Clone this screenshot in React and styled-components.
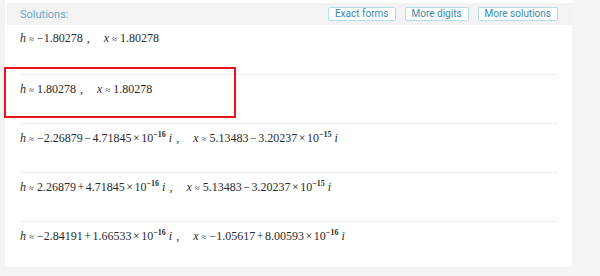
import styled, { createGlobalStyle } from 'styled-components'

const GlobalStyle = createGlobalStyle`
  html, body {
    margin: 0;
    padding: 0;
    background: #f4f4f4;
  }
`

const Page = styled.div`
  width: 600px;
  height: 276px;
  padding: 0 28px 9px 5px;
  box-sizing: border-box;
  overflow: hidden;
`

const Panel = styled.section`
  position: relative;
  background: #fff;
  height: 267px;
  padding-top: 3px;
  box-sizing: border-box;
`

const Header = styled.div`
  display: flex;
  align-items: center;
  height: 22px;
  margin-left: 2px;
  padding: 0 14px 0 13px;
  background: #f3f3f3;
  font-family: Roboto, "Liberation Sans", sans-serif;
  font-size: 11px;
`

const Title = styled.span`
  flex: 1;
  color: #6ba7c4;
`

const Actions = styled.div`
  display: flex;
  gap: 9px;
`

const Action = styled.button`
  height: 14px;
  padding: 0 6px;
  border: 1px solid #b9dcea;
  border-radius: 2px;
  background: #fff;
  color: #3b87ad;
  font: inherit;
  font-size: 10px;
  line-height: 12px;
`

const Rows = styled.div`
  padding: 0 14px 0 15px;
`

const Row = styled.div`
  height: 49px;
  box-sizing: border-box;
  padding-top: ${(p) => (p.$first ? '5px' : '6px')};
  border-top: ${(p) => (p.$first ? 'none' : '1px solid #ececec')};
  font-family: "Liberation Serif", "DejaVu Serif", serif;
  font-size: 12px;
  line-height: 16px;
  color: #2a2a2a;
  white-space: nowrap;
`

const Var = styled.i`
  font-style: italic;
`

const Approx = styled.span`
  font-size: 9px;
  margin: 0 3px 0 3px;
`

const Sep = styled.span`
  margin: 0 14px 0 4px;
`

const Op = styled.span`
  margin: 0 1.5px;
`

const Sup = styled.sup`
  font-size: 8px;
  font-weight: bold;
  vertical-align: 5px;
  line-height: 0;
  margin-right: 3px;
`

const Highlight = styled.div`
  position: absolute;
  left: -1px;
  top: 67px;
  width: 232px;
  height: 51px;
  box-sizing: border-box;
  border: 2px solid #e8161c;
`

function Sci({ m, e }) {
  return (
    <>
      {m}<Op>×</Op>10<Sup>−{e}</Sup><Var>i</Var>
    </>
  )
}

function Eq({ name, children }) {
  return (
    <>
      <Var>{name}</Var><Approx>≈</Approx>{children}
    </>
  )
}

export default function App() {
  return (
    <>
      <GlobalStyle />
      <Page>
        <Panel>
          <Header>
            <Title>Solutions:</Title>
            <Actions>
              <Action>Exact forms</Action>
              <Action>More digits</Action>
              <Action>More solutions</Action>
            </Actions>
          </Header>
          <Rows>
            <Row $first>
              <Eq name='h'>−1.80278</Eq><Sep>,</Sep>
              <Eq name='x'>1.80278</Eq>
            </Row>
            <Row>
              <Eq name='h'>1.80278</Eq><Sep>,</Sep>
              <Eq name='x'>1.80278</Eq>
            </Row>
            <Row>
              <Eq name='h'>−2.26879<Op>−</Op><Sci m='4.71845' e='16' /></Eq><Sep>,</Sep>
              <Eq name='x'>5.13483<Op>−</Op><Sci m='3.20237' e='15' /></Eq>
            </Row>
            <Row>
              <Eq name='h'>2.26879<Op>+</Op><Sci m='4.71845' e='16' /></Eq><Sep>,</Sep>
              <Eq name='x'>5.13483<Op>−</Op><Sci m='3.20237' e='15' /></Eq>
            </Row>
            <Row>
              <Eq name='h'>−2.84191<Op>+</Op><Sci m='1.66533' e='16' /></Eq><Sep>,</Sep>
              <Eq name='x'>−1.05617<Op>+</Op><Sci m='8.00593' e='16' /></Eq>
            </Row>
          </Rows>
          <Highlight />
        </Panel>
      </Page>
    </>
  )
}
